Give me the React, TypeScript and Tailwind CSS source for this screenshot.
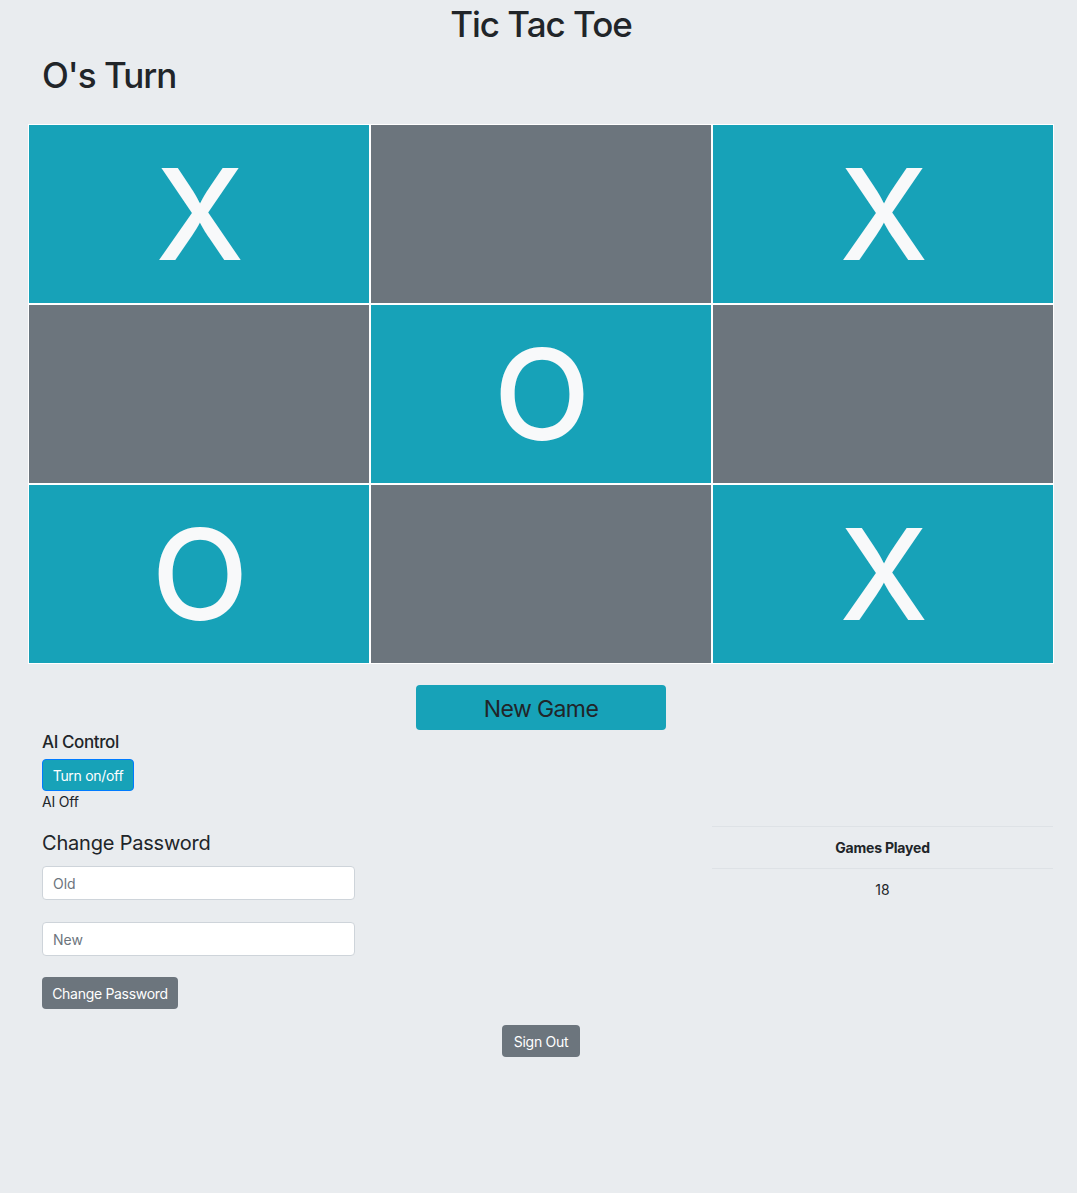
import React from "react";

const cells: string[] = ["X", "", "X", "", "O", "", "O", "", "X"];

export default function App() {
  return (
    <div
      className="min-h-[1193px] w-full bg-[#e9ecef] text-[#212529]"
      style={{ fontFamily: 'Inter, "Noto Sans", Arial, sans-serif' }}
    >
      <div className="ml-[28px] w-[1026px] pt-[3px]">
        <h1 className="text-center text-[35px] font-medium leading-[1.2] tracking-[-1px]">Tic Tac Toe</h1>
        <h2 className="mt-[9px] pl-[14px] text-[35px] font-medium leading-[1.2] tracking-[-1px]">O's Turn</h2>

        <div className="mt-[28px] grid grid-cols-3">
          {cells.map((c, i) => (
            <div
              key={i}
              className={`flex h-[180px] items-center justify-center border border-white ${
                c ? "bg-[#17a2b8]" : "bg-[#6c757d]"
              }`}
            >
              <span className="text-[126px] font-medium leading-none tracking-[-2px] text-[#f8f9fa]">{c}</span>
            </div>
          ))}
        </div>

        <div className="mt-[21px] flex justify-center">
          <button className="h-[45px] w-[250px] rounded-[4px] bg-[#17a2b8] pt-[3px] text-[23px] leading-none tracking-[-0.6px] text-[#212529]">
            New Game
          </button>
        </div>

        <div className="pl-[14px]">
          <div className="mt-[2px] text-[17px] font-medium leading-[1.25] tracking-[-0.4px]">AI Control</div>
          <button className="mt-[6px] h-[32px] w-[92px] rounded-[4px] border border-[#007bff] bg-[#17a2b8] pt-[2px] text-[14px] leading-none tracking-[-0.3px] text-white">
            Turn on/off
          </button>
          <div className="text-[14px] leading-[21px] tracking-[-0.2px]">AI Off</div>
        </div>

        <div className="mt-[14px] grid grid-cols-3">
          <div className="pl-[14px] pt-[5px]">
            <div className="text-[20px] font-normal leading-[1.25] tracking-[-0.2px]">Change Password</div>
            <input
              className="mt-[10px] block h-[34px] w-[313px] rounded-[4px] border border-[#ced4da] bg-white px-[10px] text-[14px] placeholder:text-[#6c757d] outline-none"
              placeholder="Old"
            />
            <input
              className="mt-[22px] block h-[34px] w-[313px] rounded-[4px] border border-[#ced4da] bg-white px-[10px] text-[14px] placeholder:text-[#6c757d] outline-none"
              placeholder="New"
            />
            <button className="mt-[21px] h-[32px] w-[136px] rounded-[4px] bg-[#6c757d] pt-[2px] text-[14px] leading-none tracking-[-0.3px] text-white">
              Change Password
            </button>
          </div>
          <div></div>
          <div>
            <table className="w-[341px] border-collapse text-[14px]">
              <thead>
                <tr>
                  <th className="border-y border-[#dee2e6] py-[10px] text-center font-bold leading-[21px] tracking-[-0.2px]">
                    Games Played
                  </th>
                </tr>
              </thead>
              <tbody>
                <tr>
                  <td className="py-[10px] text-center leading-[21px]">18</td>
                </tr>
              </tbody>
            </table>
          </div>
        </div>

        <div className="mt-[16px] flex justify-center">
          <button className="h-[32px] w-[78px] rounded-[4px] bg-[#6c757d] pt-[2px] text-[14px] leading-none tracking-[-0.3px] text-white">
            Sign Out
          </button>
        </div>
      </div>
    </div>
  );
}
